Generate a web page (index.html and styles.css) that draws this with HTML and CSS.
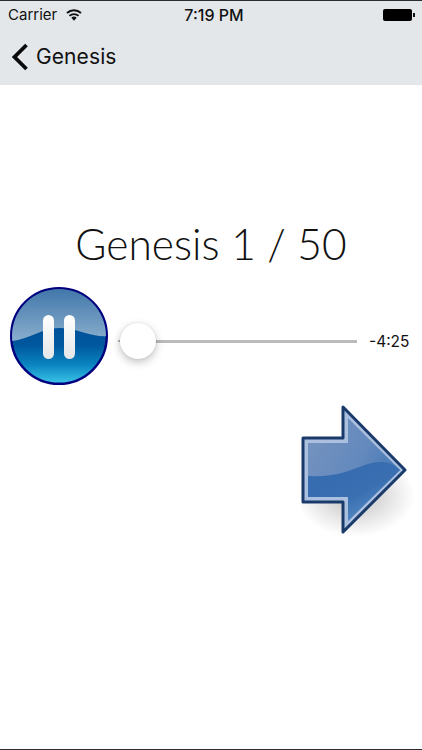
FILE: index.html
```html
<!DOCTYPE html>
<html lang="en">
<head>
  <meta charset="UTF-8" />
  <title>Genesis</title>
  <link rel="stylesheet" href="styles.css">
</head>
<body>
  <header class="top-bar">
    <div class="status-bar">
      <div class="status-left">
        <span>Carrier</span>
        <svg class="wifi" width="16" height="12" viewBox="0 0 16 12">
          <path d="M8 11.8 5.3 8.8a4 4 0 0 1 5.4 0z" fill="#111"/>
          <path d="M3.4 6.9a6.8 6.8 0 0 1 9.2 0" fill="none" stroke="#111" stroke-width="1.9"/>
          <path d="M1 4a10.2 10.2 0 0 1 14 0" fill="none" stroke="#111" stroke-width="1.9"/>
        </svg>
      </div>
      <span class="clock">7:19 PM</span>
      <div class="battery"><span class="battery-body"></span><span class="battery-tip"></span></div>
    </div>
    <nav class="nav-bar">
      <svg class="back" width="18" height="28" viewBox="0 0 18 28">
        <path d="M15.5 2 3.5 14 15.5 26" fill="none" stroke="#0a0a0a" stroke-width="3.8"/>
      </svg>
      <span class="nav-title">Genesis</span>
    </nav>
  </header>

  <main>
    <h1 class="chapter">Genesis 1 / 50</h1>

    <div class="player">
      <svg class="pause" width="100" height="100" viewBox="0 0 100 100">
        <defs>
          <linearGradient id="ballBase" x1="0" y1="0" x2="0" y2="1">
            <stop offset="0" stop-color="#00408c"/>
            <stop offset="0.6" stop-color="#00589e"/>
            <stop offset="0.8" stop-color="#0a84c0"/>
            <stop offset="1" stop-color="#3cc6e8"/>
          </linearGradient>
          <linearGradient id="ballGloss" x1="0" y1="0" x2="0" y2="1">
            <stop offset="0" stop-color="#3d74a8"/>
            <stop offset="1" stop-color="#8aaecd"/>
          </linearGradient>
          <linearGradient id="barFill" x1="0" y1="0" x2="0" y2="1">
            <stop offset="0" stop-color="#ffffff"/>
            <stop offset="1" stop-color="#e4e6e8"/>
          </linearGradient>
          <clipPath id="ballClip"><circle cx="50" cy="50" r="47"/></clipPath>
        </defs>
        <circle cx="50" cy="50" r="47.8" fill="url(#ballBase)" stroke="#00007e" stroke-width="2.4"/>
        <path clip-path="url(#ballClip)" d="M0 0H100V50C84 52 68 42 50 42C32 42 18 55 0 55z" fill="url(#ballGloss)"/>
        <rect x="34" y="29" width="11" height="44" rx="5.5" fill="url(#barFill)"/>
        <rect x="55" y="29" width="11" height="44" rx="5.5" fill="url(#barFill)"/>
      </svg>

      <div class="slider">
        <div class="slider-stub"></div>
        <div class="slider-thumb"></div>
        <div class="slider-track"></div>
      </div>
      <span class="time-left">-4:25</span>
    </div>

    <div class="next-row">
      <svg class="next" width="122" height="150" viewBox="0 0 122 150">
        <defs>
          <radialGradient id="arrowShadow" cx="0.5" cy="0.5" r="0.5">
            <stop offset="0" stop-color="#000" stop-opacity="0.26"/>
            <stop offset="0.6" stop-color="#000" stop-opacity="0.1"/>
            <stop offset="1" stop-color="#000" stop-opacity="0"/>
          </radialGradient>
          <linearGradient id="arrowFill" x1="0" y1="0" x2="1" y2="0.6">
            <stop offset="0" stop-color="#7794bf"/>
            <stop offset="0.6" stop-color="#6389bd"/>
            <stop offset="1" stop-color="#3f74b4"/>
          </linearGradient>
          <linearGradient id="arrowLow" x1="0" y1="0" x2="0.8" y2="1">
            <stop offset="0" stop-color="#3369ae"/>
            <stop offset="0.6" stop-color="#3a70b2"/>
            <stop offset="1" stop-color="#6193cc"/>
          </linearGradient>
        </defs>
        <ellipse cx="54" cy="90" rx="60" ry="42" fill="url(#arrowShadow)"/>
        <path d="M2 33H42V2L104 65 42 127V97H2z" fill="#abc0de" stroke="#1a3a6b" stroke-width="3" stroke-linejoin="round"/>
        <path d="M7 38H47V13L99 65 47 116V92H7z" fill="url(#arrowFill)"/>
        <path d="M7 71C30 73 48 66 64 60C78 55 90 56 99 65L47 116V92H7z" fill="url(#arrowLow)"/>
      </svg>
    </div>
  </main>
</body>
</html>
```

FILE: styles.css
```css
* {
  margin: 0;
  padding: 0;
  box-sizing: border-box;
}
html, body { height: 100%; }
body {
  font-family: "Inter", "Liberation Sans", sans-serif;
  background: #fff; color: #111;
  border-bottom: 1px solid #2a2c30;
  overflow: hidden;
}

/* TOP BAR */
.top-bar {
  height: 85px;
  background: #e3e7ea;
  border-top: 1px solid #2a2c30;
}
.status-bar {
  height: 27px; padding: 0 7px 0 8px;
  display: grid; grid-template-columns: 1fr auto 1fr;
  align-items: center;
  font-size: 15px;
}
.status-left { display: flex; align-items: center; gap: 9px; }
.clock { font-weight: 500; font-size: 16px; padding-left: 5px; }
.battery { display: flex; align-items: center; justify-content: flex-end; gap: 1px; }
.battery-body { width: 29px; height: 12px; background: #000; border-radius: 2px; }
.battery-tip { width: 2px; height: 4px; background: #111; }
.nav-bar {
  height: 57px; padding-left: 11px;
  display: flex; align-items: center; gap: 7px;
}
.nav-title { font-size: 21px; letter-spacing: 0.1px; color: #111; }

/* MAIN */
.chapter {
  margin-top: 135px;
  font-family: "Lato", sans-serif;
  font-weight: 300; font-size: 42.5px; line-height: 48px;
  text-align: center;
  color: #111;
}

/* PLAYER */
.player {
  display: flex; align-items: center;
  margin-top: 18px; padding-left: 9px;
}
.pause { flex: none; }
.slider {
  width: 239px; height: 40px; margin: 10px 0 0 9px;
  display: flex; align-items: center;
}
.slider-stub { width: 2px; height: 2px; flex: none; background: #b6b6b6; }
.slider-thumb {
  width: 36px; height: 36px; flex: none; margin-right: -2px;
  background: #fff; border-radius: 50%;
  box-shadow: 0 3px 8px rgba(0,0,0,0.25), 0 0 2px rgba(0,0,0,0.12);
  position: relative; z-index: 1;
}
.slider-track { flex: 1; height: 3px; background: #bbb; }
.time-left { margin: 10px 0 0 12px; font-size: 15.5px; }

/* NEXT BUTTON */
.next-row {
  display: flex; justify-content: flex-end;
  margin-top: 19px;
}
.next { display: block; margin-right: -1px; }
```
